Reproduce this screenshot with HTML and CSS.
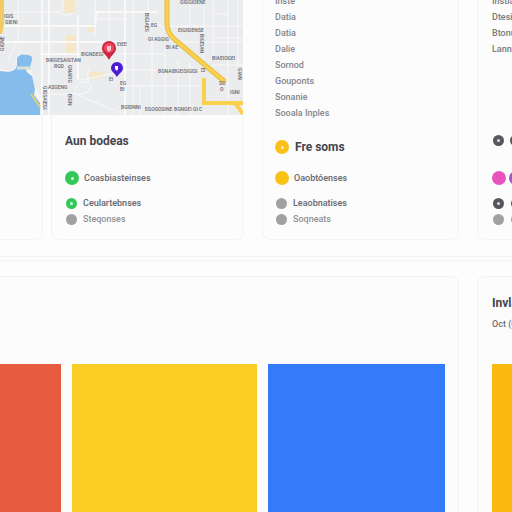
FILE: index.html
```html
<!DOCTYPE html>
<html lang="en">
<head>
<meta charset="utf-8">
<title>Dashboard</title>
<link rel="stylesheet" href="styles.css">
</head>
<body>
<main>
<section class="columns overview">
  <div class="places">
    <svg class="map" viewBox="0 0 243 115" preserveAspectRatio="xMinYMin slice" role="img" aria-label="Map">
      <rect width="243" height="115" fill="#ebecee"/>
      <g fill="#f6e7c8"><path d="M64 0h11v13H64zM66 35h10v19H66zM91 71l14 1-3 6-15 1zM87 27h7v5h-7z"/></g>
      <path d="M0 69c9 3 17 1 16-5-1-9 2-10 8-9 9 0 9 5 7 14l3 15 7 13-1 18H0z" fill="#f3f4f5"/>
      <g fill="none" stroke="#f9f9fa">
        <path stroke-width="2" d="M42 0v115M49 0v115M78 15v65M0 26h95l2-14h60M0 42h126M125 0v115M40 54h40"/>
        <path d="M18 0v38l-10 22M13 12h45q4 0 5-6V0M58 12q6 6 15 1M95 0v37M97 19h30M109 0v40M83 54h42M80 80l35-7M74 94q2-14 14-12 6 4 0 10l-10 3 45 19M50 94l28 0M88 68v14M133 0v115M152 40v75M165 50v65M178 60v55M190 0v25M190 62v53M213 0v55M228 0v115M125 54h40M125 86h78M165 26h78M180 42h63M148 0v22l18 5M204 0v65M213 14h15M213 38h30M213 65h30M238 0v65M125 70h78M140 86v29"/>
      </g>
      <path d="M0 71c11 2 16 0 17-6V58q3-5 10-3 6 0 5 5l-2 8h-4q-1 4 6 8l3 13-1 6 6 8v12H0z" fill="#84bdec"/>
      <path d="M17 68h14" stroke="#d7e1d6" stroke-width="3"/>
      <path d="M31 94l9 13" stroke="#e8cc73" stroke-width="2"/>
      <path d="M0 0h4v25l-2 9H0z" fill="#efcb62"/>
      <path d="M167 0v24q0 8 7 15l51 43" fill="none" stroke="#e6bd45" stroke-width="5"/>
      <g fill="none" stroke="#fbd04c" stroke-width="4"><path stroke-width="3" d="M167 0v24q0 8 7 15l51 43"/><path d="M204 78v25h39M235 103l8 11"/></g>
      <g class="map-labels">
        <text x="4" y="18">IGIS</text><text x="5" y="24">GIENI</text>
        <text x="46" y="62">BIRGESAIGTAN</text><text x="54" y="68">RGD</text>
        <text x="81" y="56">BIGNDEGI</text><text x="117" y="46">EIEE</text>
        <text x="48" y="89">ASGENG</text><text x="109" y="81">EI</text><text x="120" y="85">EG</text><text x="120" y="91">BI</text>
        <text x="121" y="109">BGIDNNI</text><text x="145" y="111">EGOGOSINE</text><text x="174" y="111">BGNGEI GI C</text>
        <text x="158" y="73">BGNAIBGEISIGISI</text><text x="148" y="41">GI AGGIG</text>
        <text x="166" y="49">BI AE</text><text x="178" y="32">EIGISIENSE</text><text x="151" y="27">EG</text>
        <text x="212" y="60">BIAEIOGEI</text><text x="230" y="94">IGNI</text>
        <text x="219" y="85">SO</text><text x="220" y="91">O</text><text x="180" y="4">GIGGIOENE</text>
        <text transform="translate(4 51) rotate(-90)">GIGNE</text>
        <text transform="translate(43 86) rotate(90)">GIGSAIEGI</text>
        <text transform="translate(68 65) rotate(90)">GNAFIG</text>
        <text transform="translate(68 94) rotate(90)">BIGN</text>
        <text transform="translate(145 13) rotate(90)">BIGIAEG</text>
        <text transform="translate(200 34) rotate(90)">BIGEIAN</text>
        <text transform="translate(238 68) rotate(90)">GIAN</text>
        <text transform="translate(201 68) rotate(90)">EI</text>
      </g>
      <path d="M109 60c-3-6-7-7-7-12a7 7 0 0 1 14 0c0 5-4 6-7 12z" fill="#cf2545"/>
      <circle cx="109" cy="48" r="5" fill="#ea4a61"/><path d="M107 46h4v4l-2 2-2-2z" fill="#ffc4cb"/>
      <path d="M117 77c-2-4-6-5-6-9a6 6 0 0 1 12 0c0 4-4 5-6 9z" fill="#4b1bd2"/>
      <path d="M115 66h3v3l-1 2-2-2z" fill="#fff"/>
    </svg>
    <div class="place-cards">
      <article class="card card-edge"></article>
      <article class="card status">
        <h2>Aun bodeas</h2>
        <ul>
          <li class="lead"><span class="dot green"><i class="pip"></i></span>Coasbiasteinses</li>
          <li><span class="dot small green"><i class="pip"></i></span>Ceulartebnses</li>
          <li class="muted"><span class="dot small gray"></span>Steqonses</li>
        </ul>
      </article>
    </div>
  </div>
  <article class="card panel status">
    <ul class="links">
      <li>Inste</li><li>Datia</li><li>Datia</li><li>Dalie</li><li>Sornod</li><li>Gouponts</li><li>Sonanie</li><li>Sooala Inples</li>
    </ul>
    <h2 class="with-dot"><span class="dot gold"><i class="pip"></i></span>Fre soms</h2>
    <ul>
      <li class="lead"><span class="dot gold"></span>Oaobtóenses</li>
      <li><span class="dot small gray"></span>Leaobnatises</li>
      <li class="muted"><span class="dot small gray"></span>Soqneats</li>
    </ul>
  </article>
  <article class="card panel clipped status">
    <ul class="links">
      <li>Instial</li><li>Dtesial</li><li>Btonual</li><li>Lannl Fe</li>
    </ul>
    <div class="dots"><span class="dot small slate"><i class="pip"></i></span><span class="dot small slate"></span></div>
    <ul>
      <li class="lead"><span class="dot pink"></span><span class="dot purple"></span></li>
      <li><span class="dot small slate"><i class="pip"></i></span><span class="dot small slate"></span></li>
      <li><span class="dot small gray"></span><span class="dot small gray"></span></li>
    </ul>
  </article>
</section>
<div class="divider"></div>
<section class="columns charts">
  <article class="card chart">
    <div class="bar red"></div><div class="bar yellow"></div><div class="bar blue"></div>
  </article>
  <article class="card summary">
    <h2>Invla</h2>
    <p>Oct&nbsp;(0)</p>
    <div class="bar amber"></div>
  </article>
</section>
</main>
</body>
</html>
```
FILE: styles.css
```css
* { box-sizing: border-box; }
body {
  margin: 0;
  overflow: hidden;
  background: #fdfdfd;
  color: #6b6c72;
  font: 500 9px/16px Roboto, "Liberation Sans", sans-serif;
}
main { display: flex; flex-direction: column; min-height: 100vh; }
h2, p, ul { margin: 0; padding: 0; }
ul { list-style: none; }
h2 { color: #43444d; font-size: 12px; font-weight: 700; line-height: 16px; white-space: nowrap; }
.columns { display: grid; column-gap: 18px; }
.overview { grid-template-columns: 244fr 197fr 35fr; }
.card { min-width: 0; border: 1px solid #f3f3f4; border-radius: 8px; background: #fcfcfc; }
.places { display: flex; flex-direction: column; min-width: 0; }
.map { display: block; width: 100%; height: 115px; padding-right: 1px; }
.map-labels { fill: #666970; font: 500 5px Roboto, "Liberation Sans", sans-serif; }
.place-cards { display: grid; flex: 1; grid-template-columns: 43fr 193fr; column-gap: 8px; }
.place-cards .card { border-top: 0; border-top-left-radius: 0; border-top-right-radius: 0; }
.card-edge { border-left: 0; border-bottom-left-radius: 0; }
.status { display: flex; flex-direction: column; padding: 0 13px 12px; }
.place-cards .status { padding-top: 18px; }
.status h2 { margin-bottom: 21px; }
.status li { display: flex; align-items: center; gap: 5px; height: 16px; color: #65666c; white-space: nowrap; }
.status .lead { margin-bottom: 9px; }
.status .muted { color: #909196; }
.panel { height: 240px; padding-left: 12px; border-top: 0; border-top-left-radius: 0; border-top-right-radius: 0; }
.panel .links { height: 138px; margin-top: -7px; flex: none; }
.panel .links + * { margin-top: 8px; }
.status .links li { color: #85868b; }
.status .with-dot { display: flex; align-items: center; gap: 6px; margin-bottom: 15px; }
.dot { display: flex; flex: none; align-items: center; justify-content: center; width: 14px; height: 14px; border-radius: 50%; }
.small { width: 11px; height: 11px; margin-left: 1px; margin-right: 1px; }
.pip { width: 3px; height: 3px; border-radius: 50%; background: #fff; opacity: .8; }
.green { background: #34c759; }
.gold { background: #fbc116; }
.gray { background: #a1a1a3; }
.slate { background: #565760; }
.pink { background: #e754be; }
.purple { background: #a454cf; }
.clipped { padding-left: 14px; padding-right: 0; overflow: hidden; border-right: 0; border-bottom-right-radius: 0; }
.clipped .links li { color: #77787e; }
.clipped .links { height: 131px; }
.clipped .dots { display: flex; align-items: center; gap: 4px; height: 16px; margin-bottom: 22px; }
.clipped .lead { gap: 3px; }
.divider { height: 5px; margin: 16px 0 15px; border: 1px solid #f3f3f4; border-width: 1px 0; }
.charts { flex: 1; grid-template-columns: 459fr 35fr; }
.charts .card { border-bottom: 0; border-bottom-left-radius: 0; border-bottom-right-radius: 0; }
.chart { display: grid; grid-template-columns: 61fr 185fr 177fr; column-gap: 11px; padding: 87px 13px 0 0; border-left: 0; border-top-left-radius: 0; }
.bar { min-height: 148px; }
.red { background: #e75c40; }
.yellow { background: #facd24; }
.blue { background: #347bf9; }
.amber { flex: 1; background: #fbb90f; }
.summary { display: flex; flex-direction: column; padding: 18px 0 0 14px; overflow: hidden; border-right: 0; border-top-right-radius: 0; }
.summary p { margin: 5px 0 32px; white-space: nowrap; }
```
